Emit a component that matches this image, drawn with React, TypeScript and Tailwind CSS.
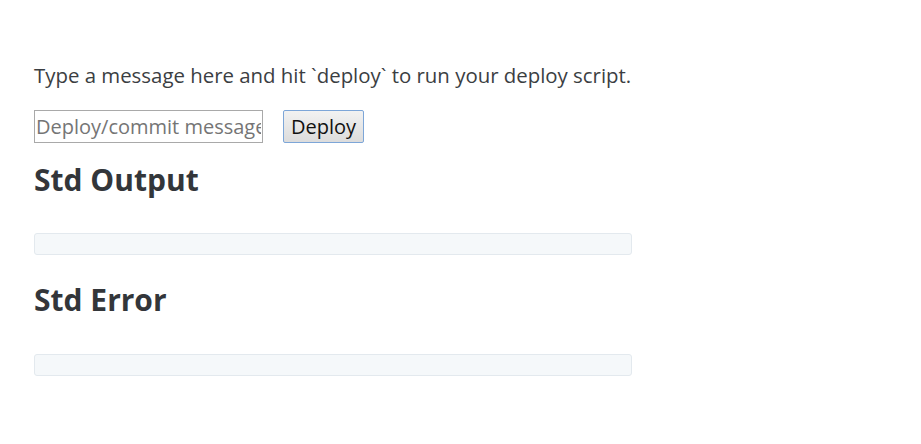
export default function App() {
  return (
    <div className="min-h-screen bg-white font-['Open_Sans',sans-serif] text-[#333]">
      <div className="w-[598px] pl-[34px] pt-[60px] box-content">
        <p className="text-[20.4px] leading-[30px] whitespace-nowrap text-[#3b3e42]">
          Type a message here and hit `deploy` to run your deploy script.
        </p>
        <div className="mt-[20px] flex items-center gap-[20px]">
          <input
            type="text"
            placeholder="Deploy/commit message"
            className="h-[33px] w-[229px] border border-[#a9a9a9] px-[1px] text-[20px] text-[#333] placeholder:text-[#757575] outline-none"
          />
          <button className="h-[33px] w-[81px] rounded-[2px] border border-[#7da6d8] bg-gradient-to-b from-[#f2f2f2] to-[#dcdcdc] text-[20px] leading-none text-[#111]">
            Deploy
          </button>
        </div>
        <h2 className="mt-[15px] text-[30px] font-bold leading-[44px] text-[#33363a]">Std Output</h2>
        <pre className="mt-[31px] h-[22px] rounded-[3px] border border-[#e3e9ee] bg-[#f5f8fa]"></pre>
        <h2 className="mt-[23px] text-[30px] font-bold leading-[44px] text-[#33363a]">Std Error</h2>
        <pre className="mt-[32px] h-[22px] rounded-[3px] border border-[#e3e9ee] bg-[#f5f8fa]"></pre>
      </div>
    </div>
  );
}
